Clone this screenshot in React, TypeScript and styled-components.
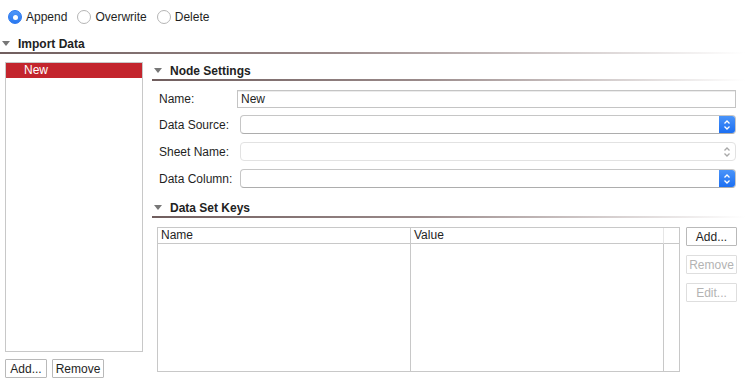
import styled, { createGlobalStyle } from "styled-components";

const GlobalStyle = createGlobalStyle`
  body {
    margin: 0;
    background: #ffffff;
    font-family: "Liberation Sans", Arial, sans-serif;
    font-size: 12px;
    color: #1f1f1f;
  }
`;

const Page = styled.div`
  width: 745px;
  height: 385px;
  display: flex;
  flex-direction: column;
  overflow: hidden;
`;

const RadioRow = styled.div`
  display: flex;
  align-items: center;
  height: 14px;
  margin-top: 10px;
  padding-left: 8px;
  gap: 10px;
`;
const RadioItem = styled.label`
  display: flex;
  align-items: center;
  gap: 4px;
  font-size: 12px;
  line-height: 14px;
`;
const RadioDot = styled.span<{ $checked?: boolean }>`
  box-sizing: border-box;
  width: 14px;
  height: 14px;
  border-radius: 50%;
  display: flex;
  align-items: center;
  justify-content: center;
  background: ${(p) => (p.$checked ? "linear-gradient(#4f97f8, #2a78f0)" : "#ffffff")};
  border: 1px solid ${(p) => (p.$checked ? "#2a78f0" : "#b5b5b5")};
  &::after {
    content: "";
    display: ${(p) => (p.$checked ? "block" : "none")};
    width: 5px;
    height: 5px;
    border-radius: 50%;
    background: #ffffff;
  }
`;

const TopSection = styled.div`
  margin-top: 11px;
`;
const SectionHeader = styled.div<{ $indent: number }>`
  display: flex;
  align-items: center;
  height: 17px;
  padding-left: ${(p) => p.$indent}px;
  gap: 8px;
  font-weight: bold;
  font-size: 12px;
  color: #222;
`;
const Triangle = styled.span`
  width: 0;
  height: 0;
  border-left: 4px solid transparent;
  border-right: 4px solid transparent;
  border-top: 5px solid #777;
`;
const HeaderLine = styled.div`
  height: 2px;
  background: linear-gradient(90deg, #705e5e 0%, #9a8a8a 45%, #ffffff 100%);
`;

const Body = styled.div`
  display: flex;
  margin-top: 8px;
  padding-left: 5px;
  gap: 9px;
`;

const LeftColumn = styled.div`
  display: flex;
  flex-direction: column;
  width: 138px;
  gap: 7px;
`;
const NodeList = styled.div`
  box-sizing: border-box;
  height: 290px;
  border: 1px solid #c8c8c8;
  background: #fff;
`;
const NodeItem = styled.div<{ $selected?: boolean }>`
  height: 15px;
  line-height: 15px;
  padding-left: 18px;
  color: ${(p) => (p.$selected ? "#ffffff" : "#1f1f1f")};
  background: ${(p) => (p.$selected ? "#c3252d" : "transparent")};
`;
const ButtonRow = styled.div`
  display: flex;
  gap: 5px;
`;
const Button = styled.button<{ $width: number }>`
  box-sizing: border-box;
  width: ${(p) => p.$width}px;
  height: 19px;
  padding: 0;
  font-family: "Liberation Sans", Arial, sans-serif;
  font-size: 12px;
  color: ${(p) => (p.disabled ? "#b3b3b3" : "#1f1f1f")};
  background: #fff;
  border: 1px solid ${(p) => (p.disabled ? "#dedede" : "#b9b9b9")};
  border-radius: 1px;
`;

const RightColumn = styled.div`
  flex: 1;
  display: flex;
  flex-direction: column;
`;

const Form = styled.div`
  display: flex;
  flex-direction: column;
  margin-top: 9px;
  padding-left: 7px;
  padding-right: 9px;
  margin-bottom: 11px;
`;
const FormRow = styled.div<{ $height: number; $gap: number }>`
  display: flex;
  align-items: center;
  height: ${(p) => p.$height}px;
  margin-bottom: ${(p) => p.$gap}px;
`;
const Label = styled.span<{ $width: number }>`
  width: ${(p) => p.$width}px;
  flex-shrink: 0;
`;
const TextInput = styled.div`
  box-sizing: border-box;
  flex: 1;
  height: 100%;
  border: 1px solid #c4c4c4;
  padding-left: 3px;
  line-height: 17px;
  box-shadow: inset 0 1px 0 #ececec;
`;
const Select = styled.div<{ $disabled?: boolean }>`
  box-sizing: border-box;
  flex: 1;
  height: 100%;
  display: flex;
  border: 1px solid ${(p) => (p.$disabled ? "#e2e2e2" : "#c6c6c6")};
  border-bottom-color: ${(p) => (p.$disabled ? "#e2e2e2" : "#adadad")};
  border-radius: 4px;
  overflow: hidden;
  background: #fff;
`;
const SelectValue = styled.div`
  flex: 1;
`;
const SelectArrow = styled.div<{ $disabled?: boolean }>`
  width: 16px;
  display: flex;
  align-items: center;
  justify-content: center;
  background: ${(p) => (p.$disabled ? "transparent" : "linear-gradient(#4a94f9, #1c6ff2)")};
  color: ${(p) => (p.$disabled ? "#a8a8a8" : "#ffffff")};
`;

const KeysArea = styled.div`
  display: flex;
  margin-top: 9px;
  padding-left: 5px;
  padding-right: 8px;
  gap: 6px;
`;
const Table = styled.div`
  box-sizing: border-box;
  flex: 1;
  height: 145px;
  border: 1px solid #c8c8c8;
  display: grid;
  grid-template-columns: 253px 253px 1fr;
  grid-template-rows: 16px 1fr;
`;
const HeadCell = styled.div<{ $faint?: boolean; $last?: boolean }>`
  border-bottom: 1px solid #c8c8c8;
  border-right: ${(p) => (p.$last ? "none" : `1px solid ${p.$faint ? "#e6e6e6" : "#c8c8c8"}`)};
  padding-left: 3px;
  line-height: 15px;
`;
const BodyCell = styled.div<{ $last?: boolean }>`
  border-right: ${(p) => (p.$last ? "none" : "1px solid #c8c8c8")};
`;
const SideButtons = styled.div`
  display: flex;
  flex-direction: column;
  gap: 9px;
`;

function Chevrons() {
  return (
    <svg width="8" height="12" viewBox="0 0 8 12" fill="none" stroke="currentColor" strokeWidth="1.3">
      <path d="M1.5 4.5 L4 2 L6.5 4.5" />
      <path d="M1.5 7.5 L4 10 L6.5 7.5" />
    </svg>
  );
}

function SelectBox({ disabled }: { disabled?: boolean }) {
  return (
    <Select $disabled={disabled}>
      <SelectValue />
      <SelectArrow $disabled={disabled}>
        <Chevrons />
      </SelectArrow>
    </Select>
  );
}

export default function App() {
  return (
    <Page>
      <GlobalStyle />
      <RadioRow>
        <RadioItem>
          <RadioDot $checked />
          Append
        </RadioItem>
        <RadioItem>
          <RadioDot />
          Overwrite
        </RadioItem>
        <RadioItem>
          <RadioDot />
          Delete
        </RadioItem>
      </RadioRow>

      <TopSection>
        <SectionHeader $indent={2}>
          <Triangle />
          Import Data
        </SectionHeader>
        <HeaderLine />
      </TopSection>

      <Body>
        <LeftColumn>
          <NodeList>
            <NodeItem $selected>New</NodeItem>
          </NodeList>
          <ButtonRow>
            <Button $width={42}>Add...</Button>
            <Button $width={52}>Remove</Button>
          </ButtonRow>
        </LeftColumn>

        <RightColumn>
          <SectionHeader $indent={2}>
            <Triangle />
            Node Settings
          </SectionHeader>
          <HeaderLine />

          <Form>
            <FormRow $height={18} $gap={7}>
              <Label $width={78}>Name:</Label>
              <TextInput>New</TextInput>
            </FormRow>
            <FormRow $height={19} $gap={8}>
              <Label $width={81}>Data Source:</Label>
              <SelectBox />
            </FormRow>
            <FormRow $height={19} $gap={8}>
              <Label $width={81}>Sheet Name:</Label>
              <SelectBox disabled />
            </FormRow>
            <FormRow $height={19} $gap={0}>
              <Label $width={81}>Data Column:</Label>
              <SelectBox />
            </FormRow>
          </Form>

          <SectionHeader $indent={2}>
            <Triangle />
            Data Set Keys
          </SectionHeader>
          <HeaderLine />

          <KeysArea>
            <Table>
              <HeadCell>Name</HeadCell>
              <HeadCell $faint>Value</HeadCell>
              <HeadCell $last />
              <BodyCell />
              <BodyCell />
              <BodyCell $last />
            </Table>
            <SideButtons>
              <Button $width={51}>Add...</Button>
              <Button $width={51} disabled>
                Remove
              </Button>
              <Button $width={51} disabled>
                Edit...
              </Button>
            </SideButtons>
          </KeysArea>
        </RightColumn>
      </Body>
    </Page>
  );
}
